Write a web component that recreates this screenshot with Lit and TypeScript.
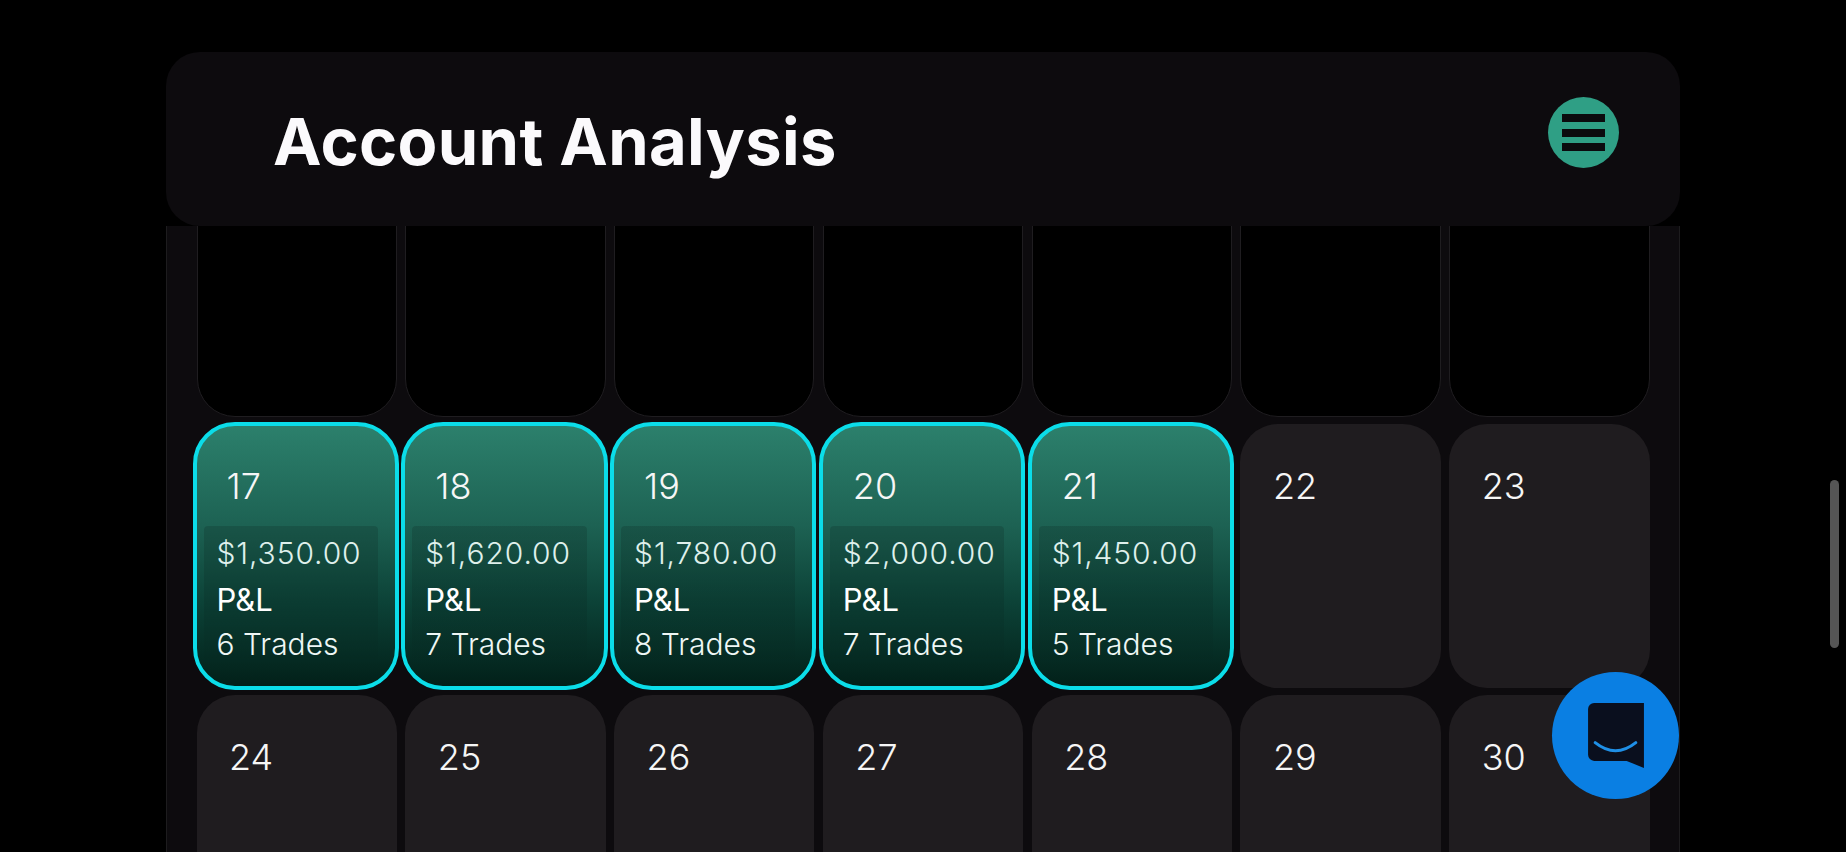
import { LitElement, html, css, svg } from "lit";
import { customElement } from "lit/decorators.js";

type Cell = { day?: number; amount?: string; trades?: number };

const cells: Cell[] = [
  {}, {}, {}, {}, {}, {}, {},
  { day: 17, amount: "$1,350.00", trades: 6 },
  { day: 18, amount: "$1,620.00", trades: 7 },
  { day: 19, amount: "$1,780.00", trades: 8 },
  { day: 20, amount: "$2,000.00", trades: 7 },
  { day: 21, amount: "$1,450.00", trades: 5 },
  { day: 22 }, { day: 23 },
  { day: 24 }, { day: 25 }, { day: 26 }, { day: 27 }, { day: 28 }, { day: 29 }, { day: 30 },
];

@customElement("app-root")
export class AppRoot extends LitElement {
  static styles = css`
    :host {
      display: block;
      position: relative;
      height: 852px;
      overflow: hidden;
      background: #000;
      font-family: Inter, "Liberation Sans", sans-serif;
      color: #fff;
    }
    .page {
      display: flex;
      flex-direction: column;
      height: 852px;
      box-sizing: border-box;
      padding: 52px 166px 0;
    }
    .header {
      flex: 0 0 174px;
      box-sizing: border-box;
      border-radius: 34px;
      background: #0d0b0e;
      display: flex;
      align-items: flex-start;
      justify-content: space-between;
      padding: 45px 61px 0 107px;
      position: relative;
      z-index: 1;
    }
    h1 {
      margin: 0;
      font-size: 65px;
      line-height: 52px;
      padding-top: 19px;
      font-weight: 700;
      letter-spacing: 0.35px;
      color: #fbfafc;
    }
    .menu {
      width: 71px;
      height: 71px;
      border-radius: 50%;
      background: #2f9f85;
      display: flex;
      flex-direction: column;
      align-items: center;
      justify-content: center;
      gap: 6.5px;
    }
    .menu span {
      width: 43px;
      height: 8px;
      background: #0b0b0e;
    }
    .panel {
      flex: 1;
      min-height: 0;
      overflow: hidden;
      background: #0d0b0e;
      border-left: 1.5px solid #1d1c1e;
      border-right: 1.5px solid #1d1c1e;
      padding: 0 29.5px 0 29.5px;
    }
    .grid {
      display: grid;
      grid-template-columns: repeat(7, 1fr);
      grid-auto-rows: 264px;
      column-gap: 8.5px;
      row-gap: 7px;
      margin-top: -73px;
    }
    .cell {
      box-sizing: border-box;
      border-radius: 38px;
      background: #1f1c1f;
      padding: 40px 0 0 32.5px;
    }
    .empty {
      background: #000;
      border: 1.5px solid #1f1d20;
    }
    .day {
      font-size: 36px;
      line-height: 44px;
      font-weight: 300;
      color: #f6f6f6;
    }
    .active {
      margin: -2px -2px -2px -4px;
      padding: 38px 0 0 0;
      border: 4.5px solid #0bdde9;
      border-radius: 42px;
      background: linear-gradient(180deg, #2c806c 0%, #1d6253 38%, #0c4237 68%, #022019 100%);
    }
    .active .day {
      padding-left: 30px;
      height: 62px;
    }
    .stats {
      margin: 0 17px 0 7px;
      padding: 5px 0 0 13px;
      border-radius: 4px;
      background: linear-gradient(180deg, rgba(0, 0, 0, 0.14) 0%, rgba(0, 0, 0, 0.1) 55%, rgba(0, 0, 0, 0) 100%);
      font-size: 30px;
      line-height: 45.5px;
      font-weight: 300;
      white-space: nowrap;
      color: #eef7f5;
    }
    .amount {
      letter-spacing: 0.9px;
      color: #dff0ec;
    }
    .label {
      font-weight: 400;
      color: #fff;
      font-size: 31px;
    }
    .scrollbar {
      position: absolute;
      left: 1830px;
      top: 480px;
      width: 9px;
      height: 168px;
      border-radius: 5px;
      background: #555;
    }
    .fab {
      position: absolute;
      left: 1552px;
      top: 672px;
      width: 127px;
      height: 127px;
      border-radius: 50%;
      background: #0a7fe3;
      display: flex;
      align-items: center;
      justify-content: center;
      z-index: 2;
    }
    .fab svg {
      width: 56px;
      height: 65px;
      display: block;
    }
  `;

  private renderCell(c: Cell) {
    if (c.day === undefined) return html`<div class="cell empty"></div>`;
    if (c.amount) {
      return html`<div class="cell active">
        <div class="day">${c.day}</div>
        <div class="stats">
          <div class="amount">${c.amount}</div>
          <div class="label">P&amp;L</div>
          <div>${c.trades} Trades</div>
        </div>
      </div>`;
    }
    return html`<div class="cell"><div class="day">${c.day}</div></div>`;
  }

  render() {
    return html`
      <div class="page">
        <header class="header">
          <h1>Account Analysis</h1>
          <div class="menu"><span></span><span></span><span></span></div>
        </header>
        <main class="panel">
          <div class="grid">${cells.map((c) => this.renderCell(c))}</div>
        </main>
      </div>
      <div class="scrollbar"></div>
      <div class="fab">
        <svg viewBox="0 0 55 64">
          ${svg`<path d="M6 0H55V64L38 57H6a6 6 0 0 1-6-6V6a6 6 0 0 1 6-6Z" fill="#0a0f1e"/>
          <path d="M7 39Q27 55 47 39" fill="none" stroke="#1f8fe6" stroke-width="3" stroke-linecap="round"/>`}
        </svg>
      </div>
    `;
  }
}
